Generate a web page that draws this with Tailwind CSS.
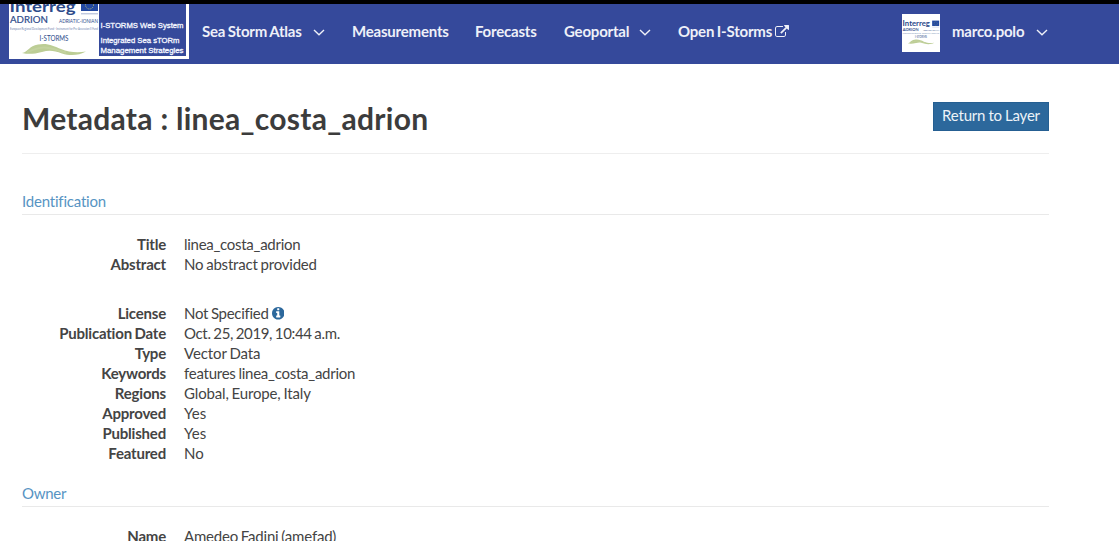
<!DOCTYPE html>
<html lang="en">
<head>
<meta charset="utf-8">
<title>Metadata : linea_costa_adrion</title>
<script src="https://cdn.jsdelivr.net/npm/@tailwindcss/browser@4"></script>
</head>
<body class="h-[541px] overflow-hidden bg-white font-[Lato,sans-serif] text-[15px] leading-5 tracking-[-0.2px] [word-spacing:-0.8px] text-[#444]">
<svg class="hidden">
  <defs>
  <g id="interreg">
    <g class="font-normal tracking-normal [word-spacing:0px]" font-family="Lato, sans-serif" fill="#2c4a8a">
      <text x="0.500" y="7.500" font-size="16" class="font-bold" textLength="66" lengthAdjust="spacingAndGlyphs">Interreg</text>
      <text x="1" y="19.300" font-size="10" stroke="#2c4a8a" stroke-width=".2" textLength="38" lengthAdjust="spacingAndGlyphs">ADRION</text>
      <text x="50" y="19" font-size="5.500" textLength="39" lengthAdjust="spacingAndGlyphs">ADRIATIC-IONIAN</text>
      <text x="1" y="25.500" font-size="2.800" opacity=".7" textLength="88" lengthAdjust="spacingAndGlyphs">European Regional Development Fund - Instrument for Pre-Accession II Fund</text>
      <text x="30.500" y="36.700" font-size="6.600" textLength="29" lengthAdjust="spacingAndGlyphs">I-STORMS</text>
    </g>
    <rect x="72" y="-6" width="17" height="13" fill="#2349a0"/>
    <circle cx="80.500" cy="1" r="4" fill="none" stroke="#b6b97a" stroke-width="1" stroke-dasharray="1 1.100"/>
    <path d="M72 9.800h17" stroke="#8fa0c6" stroke-width=".8"/>
    <path d="M13 49C19 48 20 42 29 40.500C38 38.500 45 42 52 45C60 48.500 69 49 77 47.500C70 51.500 61 52 53 49.500C45 46.500 40 46 33 48C25 50 20 50.500 13 49Z" fill="#bccd95"/>
    <path d="M18 48C25 46 28 43.500 35 43.500C43 43.500 49 47 57 48.500" fill="none" stroke="#c3d29f" stroke-width="2"/>
  </g>
  </defs>
  <symbol id="chevron" viewBox="0 0 12 8"><path d="M1 1l5 4.700l5-4.700" fill="none" stroke="currentColor" stroke-width="1.400"/></symbol>
</svg>

<header class="flex h-16 items-start border-t-4 border-black bg-[#35499b] text-[15px] font-bold text-[#eef0f8]">
  <div class="ml-[9px] flex h-[55px] w-[180px] shrink-0 bg-white">
    <svg class="h-[55px] w-[90px]" viewBox="0 0 90 55"><use href="#interreg"/></svg>
    <svg class="h-[52px] w-[87px]" viewBox="0 0 87 52">
      <rect width="87" height="52" fill="#35499b"/>
      <g class="font-normal tracking-normal [word-spacing:0px]" fill="#f4f6ff" stroke="#f4f6ff" stroke-width=".3" font-family="Liberation Sans, sans-serif" font-size="7.500">
        <text x="1.500" y="23.700" textLength="83" lengthAdjust="spacingAndGlyphs">I-STORMS Web System</text>
        <text x="1.500" y="39.200" textLength="79" lengthAdjust="spacingAndGlyphs">Integrated Sea sTORm</text>
        <text x="1.500" y="49.200" textLength="83" lengthAdjust="spacingAndGlyphs">Management Strategies</text>
      </g>
    </svg>
  </div>
  <nav class="ml-[13px] flex h-[54px] w-[700px] shrink-0 items-center whitespace-nowrap">
    <a class="flex w-[150px] items-center"><span class="w-[111px]">Sea Storm Atlas</span><svg class="mt-1 h-2 w-3"><use href="#chevron"/></svg></a>
    <a class="w-[123px]">Measurements</a>
    <a class="w-[89px]">Forecasts</a>
    <a class="flex w-[114px] items-center"><span class="w-[75px]">Geoportal</span><svg class="mt-1 h-2 w-3"><use href="#chevron"/></svg></a>
    <a class="flex items-center"><span class="w-[97px]">Open I-Storms</span><svg class="mt-px h-[14px] w-[14px]" viewBox="0 0 1792 1792" fill="currentColor"><path d="M1408 928v320q0 119-84.500 203.500t-203.500 84.500h-832q-119 0-203.500-84.500t-84.500-203.500v-832q0-119 84.500-203.500t203.500-84.500h704q14 0 23 9t9 23v64q0 14-9 23t-23 9h-704q-66 0-113 47t-47 113v832q0 66 47 113t113 47h832q66 0 113-47t47-113v-320q0-14 9-23t23-9h64q14 0 23 9t9 23zm384-864v512q0 26-19 45t-45 19-45-19l-176-176-652 652q-10 10-23 10t-23-10l-114-114q-10-10-10-23t10-23l652-652-176-176q-19-19-19-45t19-45 45-19h512q26 0 45 19t19 45z"/></svg></a>
  </nav>
  <div class="flex h-[54px] items-center">
    <svg class="mt-1 h-[38px] w-[38px] bg-white" viewBox="-1 -22 92 92"><use href="#interreg"/></svg>
    <span class="ml-3 w-[84px]">marco.polo</span><svg class="mt-1 h-2 w-3"><use href="#chevron"/></svg>
  </div>
</header>

<main class="ml-[22px] w-[1027px]">
  <div class="flex h-[90px] items-start justify-between border-b border-[#eee]">
    <h1 class="mt-9 whitespace-nowrap text-[30px] leading-9 font-bold tracking-[0.28px] [word-spacing:0px] text-[#3c3c3c]">Metadata : linea_costa_adrion</h1>
    <a class="mt-[38px] flex h-[29px] w-[116px] items-center justify-center whitespace-nowrap border border-[#255f92] bg-[#2c689c] pb-[3px] text-[15px] text-[#edf3f8] [word-spacing:-0.5px]">Return to Layer</a>
  </div>
  <h2 class="mt-[37px] h-6 border-b border-[#e9e9e9] text-[#5794c3]">Identification</h2>
  <dl class="mt-[19px] grid grid-cols-[144px_1fr] gap-x-[18px] [&>dt]:text-right [&>dt]:font-bold">
    <dt>Title</dt><dd class="tracking-[-0.28px]">linea_costa_adrion</dd>
    <dt>Abstract</dt><dd class="mb-[29px]">No abstract provided</dd>
    <dt>License</dt><dd class="flex items-center gap-[3px] tracking-[-0.28px]">Not Specified <svg class="mt-px h-[12.500px] w-[12.500px] text-[#2c689c]" viewBox="128 128 1536 1536" fill="currentColor"><path d="M1152 1376v-160q0-14-9-23t-23-9h-96v-512q0-14-9-23t-23-9h-320q-14 0-23 9t-9 23v160q0 14 9 23t23 9h96v320h-96q-14 0-23 9t-9 23v160q0 14 9 23t23 9h448q14 0 23-9t9-23zm-128-896v-160q0-14-9-23t-23-9h-192q-14 0-23 9t-9 23v160q0 14 9 23t23 9h192q14 0 23-9t9-23zm640 416q0 209-103 385.500t-279.500 279.500-385.500 103-385.500-103-279.500-279.500-103-385.500 103-385.500 279.500-279.500 385.500-103 385.500 103 279.500 279.500 103 385.500z"/></svg></dd>
    <dt>Publication Date</dt><dd class="tracking-[-0.35px]">Oct. 25, 2019, 10:44 a.m.</dd>
    <dt>Type</dt><dd class="tracking-[-0.1px]">Vector Data</dd>
    <dt>Keywords</dt><dd class="tracking-[-0.25px]">features linea_costa_adrion</dd>
    <dt>Regions</dt><dd class="tracking-[-0.15px]">Global, Europe, Italy</dd>
    <dt>Approved</dt><dd class="tracking-normal">Yes</dd>
    <dt>Published</dt><dd class="tracking-normal">Yes</dd>
    <dt>Featured</dt><dd class="tracking-normal">No</dd>
  </dl>
  <h2 class="mt-5 h-6 border-b border-[#e9e9e9] tracking-[-0.3px] text-[#5794c3]">Owner</h2>
  <dl class="mt-[19px] grid grid-cols-[144px_1fr] gap-x-[18px] [&>dt]:text-right [&>dt]:font-bold">
    <dt>Name</dt><dd>Amedeo Fadini (amefad)</dd>
  </dl>
</main>
</body>
</html>
